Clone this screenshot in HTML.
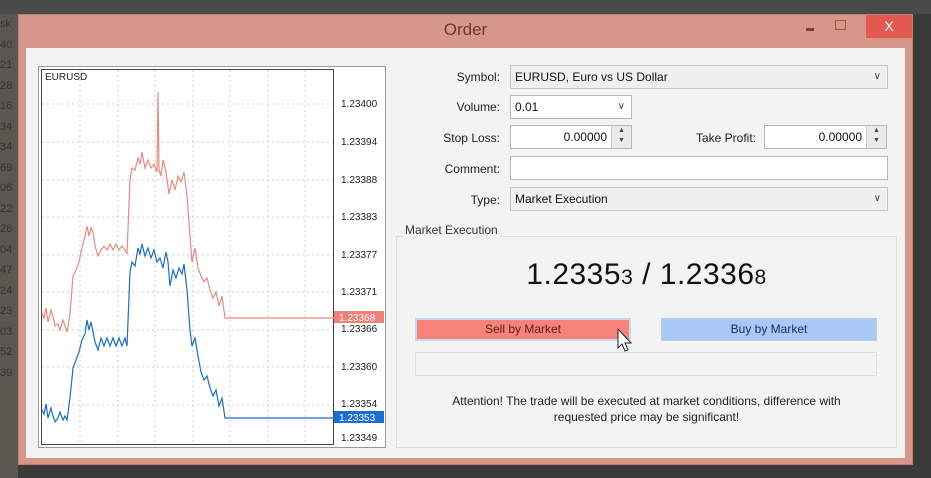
<!DOCTYPE html>
<html><head><meta charset="utf-8"><style>
*{margin:0;padding:0;box-sizing:border-box}
body{width:931px;height:478px;overflow:hidden;background:#3b3b3b;font-family:"Liberation Sans",sans-serif;position:relative}
.a{position:absolute}
.lbl{position:absolute;font-size:12px;color:#222;text-align:right;width:120px}
.inp{position:absolute;background:#fff;border:1px solid #b8b8b8;font-size:12px;color:#111;padding:4px 4px;height:24px}
.sel{background:#f0f0f0;border:1px solid #c4c4c4}
.arr{position:absolute;right:6px;top:5px;font-size:10px;color:#444}
.spin{position:absolute;right:0;top:0;width:20px;height:22px;background:#eaeaea;border-left:1px solid #ccc;font-size:7px;color:#444;text-align:center;line-height:10px}
.yl{position:absolute;left:341px;font-size:10px;color:#222}
</style></head><body>
<div class="a" style="left:0;top:0;width:931px;height:14px;background:#4a4a4a"></div>
<div class="a" style="left:0;top:14px;width:18px;height:464px;background:#5a5750;font-size:11px;color:#333;line-height:20.5px;overflow:hidden">sk<br>40<br>21<br>28<br>16<br>34<br>34<br>69<br>06<br>22<br>26<br>04<br>47<br>24<br>23<br>03<br>52<br>39</div>
<div class="a" style="left:18px;top:14px;width:895px;height:451px;background:#d6968a;border:1px solid #b88070"></div>
<div class="a" style="left:18px;top:20px;width:895px;text-align:center;font-size:17px;color:#6a3a30">Order</div>
<div class="a" style="left:806px;top:28px;width:8px;height:3px;background:#8a3a2a"></div>
<div class="a" style="left:835px;top:20px;width:11px;height:10px;border:1px solid #9a5a4a"></div>
<div class="a" style="left:866px;top:15px;width:46px;height:23px;background:#e45a50;color:#fff;text-align:center;font-size:14px;line-height:23px">X</div>
<div class="a" style="left:26px;top:48px;width:879px;height:410px;background:#f3f3f3"></div>
<!-- chart -->
<div class="a" style="left:38px;top:66px;width:348px;height:382px;background:#fff;border:1px solid #999"></div>
<div class="a" style="left:41px;top:69px;width:293px;height:376px;border:1px solid #444"></div>
<div class="a" style="left:45px;top:72px;font-size:10px;color:#222">EURUSD</div>
<svg class="a" style="left:0;top:0" width="400" height="478">
<g stroke="#ccc" stroke-dasharray="2,3" stroke-width="1">
<line x1="42" y1="104" x2="333" y2="104"/><line x1="42" y1="142" x2="333" y2="142"/><line x1="42" y1="180" x2="333" y2="180"/><line x1="42" y1="217" x2="333" y2="217"/><line x1="42" y1="255" x2="333" y2="255"/><line x1="42" y1="292" x2="333" y2="292"/><line x1="42" y1="330" x2="333" y2="330"/><line x1="42" y1="367" x2="333" y2="367"/><line x1="42" y1="405" x2="333" y2="405"/>
<line x1="80" y1="70" x2="80" y2="444"/><line x1="118" y1="70" x2="118" y2="444"/><line x1="155" y1="70" x2="155" y2="444"/><line x1="193" y1="70" x2="193" y2="444"/><line x1="230" y1="70" x2="230" y2="444"/><line x1="268" y1="70" x2="268" y2="444"/><line x1="305" y1="70" x2="305" y2="444"/>
</g>
<polyline fill="none" stroke="#e88a80" stroke-width="1.2" points="42,313 44,318 46,308 48,322 51,310 53,316 55,326 58,324 60,330 63,320 65,326 67,332 70,314 73,276 76,270 79,262 82,248 85,236 87,226 89,236 91,228 93,232 95,246 98,256 101,250 104,246 107,250 110,244 113,250 116,244 119,250 122,246 125,250 127,254 130,180 132,168 135,170 138,158 140,164 142,152 145,168 148,160 151,168 154,164 157,172 158,92 159,170 161,176 163,160 166,172 169,194 172,180 175,190 178,176 181,182 184,172 187,196 190,236 192,262 195,248 198,268 201,276 204,282 207,278 210,290 213,298 216,292 219,306 222,296 225,318 334,318"/>
<polyline fill="none" stroke="#1a6fc4" stroke-width="1.2" points="42,410 44,414 46,404 48,418 51,408 53,416 55,422 58,418 60,412 63,420 65,416 67,420 70,398 73,368 76,360 79,352 82,340 85,334 87,320 89,330 91,322 93,332 95,342 98,350 101,338 104,346 107,338 110,346 113,338 116,346 119,338 122,346 125,338 127,346 130,272 132,262 135,266 138,248 140,254 142,244 145,256 148,248 151,258 154,250 157,262 160,258 163,268 166,252 168,262 170,286 173,270 176,278 179,268 182,274 184,264 187,290 190,330 192,346 195,338 198,356 201,372 204,380 207,376 210,388 213,396 216,390 219,406 222,398 225,418 334,418"/>
<rect x="334" y="311" width="50" height="12" fill="#f08078"/>
<text x="339" y="321" font-size="10" fill="#fff" font-family="Liberation Sans">1.23368</text>
<rect x="334" y="411" width="50" height="12" fill="#1a6fd4"/>
<text x="339" y="421" font-size="10" fill="#fff" font-family="Liberation Sans">1.23353</text>
</svg>
<div class="yl" style="top:99px">1.23400</div><div class="yl" style="top:137px">1.23394</div><div class="yl" style="top:175px">1.23388</div><div class="yl" style="top:212px">1.23383</div><div class="yl" style="top:250px">1.23377</div><div class="yl" style="top:287px">1.23371</div><div class="yl" style="top:324px">1.23366</div><div class="yl" style="top:362px">1.23360</div><div class="yl" style="top:399px">1.23354</div><div class="yl" style="top:433px">1.23349</div>
<!-- form -->
<div class="lbl" style="left:380px;top:70px">Symbol:</div>
<div class="inp sel" style="left:510px;top:65px;width:378px">EURUSD, Euro vs US Dollar<span class="arr">&#8744;</span></div>
<div class="lbl" style="left:380px;top:100px">Volume:</div>
<div class="inp" style="left:510px;top:95px;width:122px">0.01<span class="arr">&#8744;</span></div>
<div class="lbl" style="left:380px;top:131px">Stop Loss:</div>
<div class="inp" style="left:510px;top:125px;width:122px;text-align:right;padding-right:24px">0.00000<div class="spin">&#9650;<br>&#9660;</div></div>
<div class="lbl" style="left:636px;top:131px">Take Profit:</div>
<div class="inp" style="left:764px;top:125px;width:123px;text-align:right;padding-right:24px">0.00000<div class="spin">&#9650;<br>&#9660;</div></div>
<div class="lbl" style="left:380px;top:162px">Comment:</div>
<div class="inp" style="left:510px;top:156px;width:378px"></div>
<div class="lbl" style="left:380px;top:193px">Type:</div>
<div class="inp sel" style="left:510px;top:187px;width:378px">Market Execution<span class="arr">&#8744;</span></div>
<div class="a" style="left:396px;top:236px;width:501px;height:212px;border:1px solid #ddd;background:#f3f3f3"></div>
<div class="a" style="left:403px;top:223px;font-size:12px;color:#333;background:#f3f3f3;padding:0 2px">Market Execution</div>
<div class="a" style="left:396px;top:258px;width:501px;text-align:center;font-size:30px;color:#111;letter-spacing:0.5px">1.2335<span style="font-size:21px">3</span> / 1.2336<span style="font-size:21px">8</span></div>
<div class="a" style="left:415px;top:318px;width:216px;height:23px;background:#f8837a;border:2px solid #c8d8f0;text-align:center;font-size:12px;line-height:19px;color:#5a1a1a">Sell by Market</div>
<div class="a" style="left:661px;top:318px;width:216px;height:23px;background:#a8c8f8;border:1px solid #bcd;text-align:center;font-size:12px;line-height:21px;color:#1a2a5a">Buy by Market</div>
<svg class="a" style="left:616px;top:328px" width="18" height="26"><path d="M2,1 L2,20 L6,16 L9,23 L12,22 L9,15 L15,15 Z" fill="#fff" stroke="#222" stroke-width="1"/></svg>
<div class="a" style="left:415px;top:352px;width:462px;height:24px;border:1px solid #ddd"></div>
<div class="a" style="left:396px;top:393px;width:501px;text-align:center;font-size:12px;color:#222;line-height:16px">Attention! The trade will be executed at market conditions, difference with<br>requested price may be significant!</div>
</body></html>
